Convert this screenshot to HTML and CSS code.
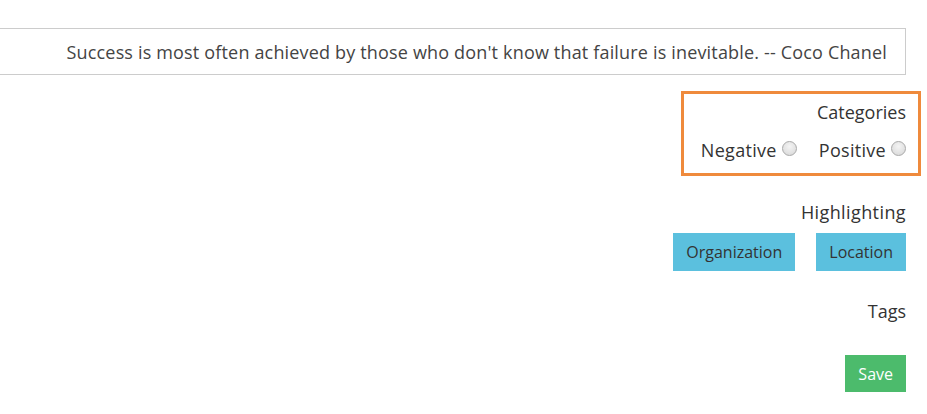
FILE: index.html
```html
<!DOCTYPE html>
<html>
<head>
<meta charset="utf-8">
<link rel="stylesheet" href="styles.css">
</head>
<body>
<div class="page">
  <div class="quote">Success is most often achieved by those who don't know that failure is inevitable. -- Coco Chanel</div>
  <div class="categories">
    <div class="label">Categories</div>
    <div class="radios">
      <label class="radio">Negative <span class="dot"></span></label>
      <label class="radio">Positive <span class="dot"></span></label>
    </div>
  </div>
  <div class="label hl">Highlighting</div>
  <div class="buttons">
    <button class="btn info">Organization</button>
    <button class="btn info">Location</button>
  </div>
  <div class="label tags">Tags</div>
  <button class="btn save">Save</button>
</div>
</body>
</html>
```
FILE: styles.css
```css
html, body { margin: 0; padding: 0; background: #fff; }
body { font-family: "Open Sans", "Noto Sans", sans-serif; color: #333; }
.page {
  display: flex;
  flex-direction: column;
  align-items: flex-end;
  padding: 28px 21px 0 0;
}
.quote {
  align-self: stretch;
  margin-left: -2px;
  height: 45px;
  border: 1px solid #ccc;
  display: flex;
  align-items: center;
  justify-content: flex-end;
  padding-right: 18px;
  font-size: 18px;
  letter-spacing: 0.17px;
  color: #444;
}
.categories {
  margin-top: 16px;
  margin-right: -15px;
  border: 3px solid #ef8a3c;
  padding: 6px 12px 11px 17px;
  display: flex;
  flex-direction: column;
  align-items: flex-end;
}
.label { font-size: 18px; line-height: 24px; color: #333; }
.hl { letter-spacing: 0.4px; }
.radios { display: flex; gap: 22px; margin-top: 14px; }
.radio { font-size: 18px; line-height: 24px; display: flex; align-items: center; gap: 5px; letter-spacing: 0.3px; }
.dot {
  width: 15px; height: 15px; border-radius: 50%;
  border: 1px solid #a9a9a9;
  box-sizing: border-box;
  background: radial-gradient(circle at 50% 35%, #f4f4f4, #d6d6d6);
  display: inline-block;
  margin-top: -4px;
}
.hl { margin-top: 24px; }
.buttons { display: flex; gap: 21px; margin-top: 9px; }
.btn {
  font-family: inherit;
  font-size: 16px;
  border: none;
  border-radius: 0;
  padding: 0 13px;
  height: 38px;
  cursor: pointer;
}
.info { background: #5bc0de; color: #333; }
.tags { margin-top: 28px; }
.save { margin-top: 32px; background: #4cbb6c; color: #fff; padding: 0 13px; height: 37px; }
```
